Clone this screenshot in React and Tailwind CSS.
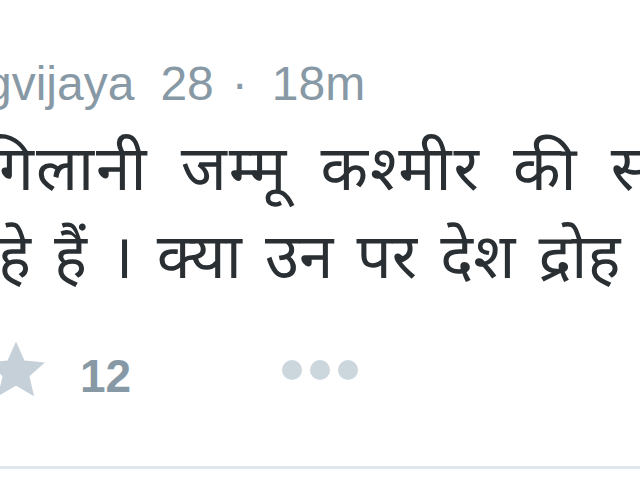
export default function App() {
    const hindi = { fontFamily: '"Noto Sans Devanagari", "Lohit Devanagari", "Noto Sans", sans-serif' };
    const latin = { fontFamily: '"Liberation Sans", Arial, sans-serif' };

    return (
        <div className="w-[640px] h-[480px] overflow-hidden bg-white">
            <div className="pt-[56px]">
                <div
                    className="-ml-[15px] flex items-baseline whitespace-nowrap text-[48px] leading-[56px] text-[#8899a6]"
                    style={latin}
                >
                    <span>gvijaya</span>
                    <span className="ml-[26px]">28</span>
                    <span className="ml-[18px] mr-[24px]">·</span>
                    <span>18m</span>
                </div>

                <div className="mt-[19px] h-[176px] whitespace-nowrap text-[62px] leading-[88px] text-[#292f33]" style={hindi}>
                    <p className="-ml-[17px] tracking-[2px] [word-spacing:14px]">गिलानी जम्मू कश्मीर की सरकार</p>
                    <p className="-ml-[2px] [word-spacing:7px]">हे हैं । क्या उन पर देश द्रोह का</p>
                </div>

                <div className="mt-[28px] flex h-[70px] items-center">
                    <svg className="-ml-[19px] h-[70px] w-[70px] shrink-0" viewBox="0 0 24 24" fill="#c5d0d9">
                        <path d="M12 2.2l2.9 6.5 7 .7-5.3 4.7 1.6 6.9L12 17.4 5.8 21l1.6-6.9L2.1 9.4l7-.7z" />
                    </svg>
                    <span className="ml-[29px] pt-[12px] text-[46px] font-bold text-[#8899a6]" style={latin}>
                        12
                    </span>
                    <div className="ml-[151px] flex gap-[8px]">
                        <span className="block h-[20px] w-[20px] rounded-full bg-[#ccd6dd]"></span>
                        <span className="block h-[20px] w-[20px] rounded-full bg-[#ccd6dd]"></span>
                        <span className="block h-[20px] w-[20px] rounded-full bg-[#ccd6dd]"></span>
                    </div>
                </div>

                <div className="mt-[61px] h-[3px] w-full bg-[#e1e8ed]"></div>
            </div>
        </div>
    );
}
